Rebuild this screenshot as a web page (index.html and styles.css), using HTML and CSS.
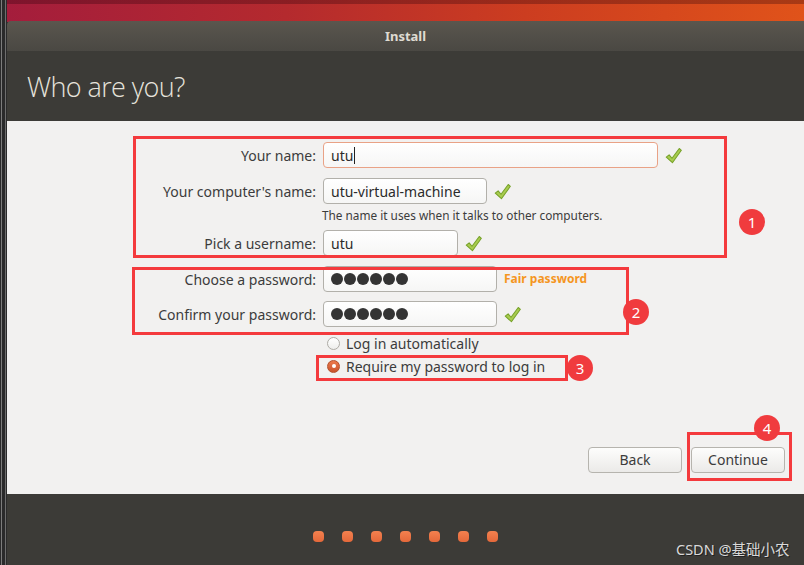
FILE: index.html
```html
<!DOCTYPE html>
<html>
<head>
<meta charset="utf-8">
<link rel="stylesheet" href="styles.css">
</head>
<body>
<div class="screen">
  <div class="edge"></div>
  <div class="main">
    <div class="desktop"></div>
    <div class="window">
      <div class="titlebar">Install</div>
      <div class="header"><h1>Who are you?</h1></div>
      <div class="content">
        <div class="form">
          <div class="row">
            <label class="label">Your name:</label>
            <div class="input focused w-name"><span>utu</span><span class="caret"></span></div>
            <svg class="check" viewBox="0 0 16 16"><path d="M1.2 9.6 L3.9 7.4 L6.6 10.6 L13.4 1.4 L15.4 3.1 L7 14.8 Z"/></svg>
          </div>
          <div class="row r2">
            <label class="label">Your computer's name:</label>
            <div class="input w-comp"><span>utu-virtual-machine</span></div>
            <svg class="check" viewBox="0 0 16 16"><path d="M1.2 9.6 L3.9 7.4 L6.6 10.6 L13.4 1.4 L15.4 3.1 L7 14.8 Z"/></svg>
          </div>
          <div class="hintrow">
            <span class="label"></span>
            <span class="hint">The name it uses when it talks to other computers.</span>
          </div>
          <div class="row r3">
            <label class="label">Pick a username:</label>
            <div class="input w-user"><span>utu</span></div>
            <svg class="check" viewBox="0 0 16 16"><path d="M1.2 9.6 L3.9 7.4 L6.6 10.6 L13.4 1.4 L15.4 3.1 L7 14.8 Z"/></svg>
          </div>
          <div class="row r4">
            <label class="label">Choose a password:</label>
            <div class="input w-pass"><span class="dots"><i></i><i></i><i></i><i></i><i></i><i></i></span></div>
            <span class="strength">Fair password</span>
          </div>
          <div class="row r5">
            <label class="label">Confirm your password:</label>
            <div class="input w-pass"><span class="dots"><i></i><i></i><i></i><i></i><i></i><i></i></span></div>
            <svg class="check" viewBox="0 0 16 16"><path d="M1.2 9.6 L3.9 7.4 L6.6 10.6 L13.4 1.4 L15.4 3.1 L7 14.8 Z"/></svg>
          </div>
          <div class="radiorow rr1">
            <span class="label"></span>
            <span class="radio"></span>
            <span class="rtext">Log in automatically</span>
          </div>
          <div class="radiorow rr2">
            <span class="label"></span>
            <span class="radio on"></span>
            <span class="rtext">Require my password to log in</span>
          </div>
        </div>
        <div class="buttons">
          <button class="btn">Back</button>
          <button class="btn">Continue</button>
        </div>
      </div>
      <div class="footer">
        <span class="dot"></span><span class="dot"></span><span class="dot"></span><span class="dot"></span><span class="dot"></span><span class="dot"></span><span class="dot"></span>
      </div>
    </div>
  </div>

  <div class="mark box1"></div>
  <div class="mark box2"></div>
  <div class="mark box3"></div>
  <div class="mark box4"></div>
  <div class="num n1">1</div>
  <div class="num n2">2</div>
  <div class="num n3">3</div>
  <div class="num n4">4</div>
  <div class="watermark">CSDN @基础小农</div>
</div>
</body>
</html>
```
FILE: styles.css
```css
* { box-sizing: border-box; }
html, body { margin: 0; padding: 0; }
body {
  width: 804px;
  height: 565px;
  overflow: hidden;
  background: #2b2b2b;
  font-family: "Noto Sans", "Open Sans", sans-serif;
}
.screen {
  position: relative;
  width: 804px;
  height: 565px;
  display: flex;
}
.edge {
  width: 7px;
  flex: none;
  background: linear-gradient(to right, #2a2a2b 0 1px, #7c7c7c 1px 2px, #2a2a2b 2px 5px, #6e6e6e 5px 6px, #2a2a2b 6px 7px);
}
.main {
  flex: 1;
  display: flex;
  flex-direction: column;
}
.desktop {
  height: 22px;
  flex: none;
  background:
    linear-gradient(to bottom, rgba(40,0,10,0.3) 0 4px, transparent 4px),
    linear-gradient(to right, #a41d3c 0%, #b42a2e 35%, #cc3d20 65%, #e0531a 100%);
}
.window {
  flex: 1;
  display: flex;
  flex-direction: column;
  border-top-left-radius: 4px;
  overflow: hidden;
  margin-top: -1px;
}
.titlebar {
  height: 30px;
  flex: none;
  background: linear-gradient(to bottom, #5a564e, #4a4843);
  color: #dfdbd2;
  font-weight: bold;
  font-size: 13px;
  text-align: center;
  line-height: 31px;
}
.header {
  height: 70px;
  flex: none;
  background: #3c3b37;
  padding-left: 20px;
  display: flex;
  align-items: center;
}
.header h1 {
  margin: 0;
  font-family: "Open Sans", "Noto Sans", sans-serif;
  font-weight: 300;
  font-size: 27px;
  color: #e6e3dc;
  letter-spacing: -0.6px;
  padding-top: 1px;
}
.content {
  height: 373px;
  flex: none;
  background: #f2f1f0;
  display: flex;
  flex-direction: column;
}
.form {
  padding-top: 21px;
  display: flex;
  flex-direction: column;
}
.row {
  height: 26px;
  display: flex;
  align-items: center;
}
.label {
  width: 309px;
  flex: none;
  text-align: right;
  margin-right: 7px;
  font-size: 14px;
  color: #3c3c3c;
}
.r2 { margin-top: 10px; }
.hintrow { margin-top: 3px; height: 16px; display: flex; align-items: center; }
.hint { font-size: 11.8px; color: #3c3c3c; margin-left: -1px; }
.r3 { margin-top: 7px; }
.r4 { margin-top: 10px; }
.r5 { margin-top: 9px; }
.input {
  height: 26px;
  border: 1px solid #b2b0aa;
  border-radius: 4px;
  background: linear-gradient(to bottom, #ffffff, #f6f6f5);
  display: flex;
  align-items: center;
  padding-left: 7px;
  font-size: 14px;
  color: #2b2b2b;
  flex: none;
}
.input.focused { border-color: #e9a286; }
.caret { width: 1px; height: 17px; background: #222; margin-left: 1px; }
.w-name { width: 335px; }
.w-comp { width: 164px; }
.w-user { width: 135px; }
.w-pass { width: 174px; }
.check {
  width: 17px;
  height: 17px;
  margin-left: 7px;
  flex: none;
}
.check path {
  fill: #a9cc4f;
  stroke: #77a22a;
  stroke-width: 1;
  stroke-linejoin: round;
}
.dots { display: flex; gap: 1px; }
.dots i {
  width: 12px;
  height: 12px;
  border-radius: 50%;
  background: #343434;
  display: block;
}
.strength {
  margin-left: 7px;
  font-size: 12px;
  font-weight: bold;
  color: #f5961f;
  margin-top: -2px;
}
.radiorow {
  height: 20px;
  display: flex;
  align-items: center;
}
.rr1 { margin-top: 6px; }
.rr2 { margin-top: 3px; }
.radio {
  width: 13px;
  height: 13px;
  border-radius: 50%;
  border: 1px solid #aeaca6;
  background: linear-gradient(to bottom, #ffffff, #eeeeec);
  margin-left: 4px;
  margin-right: 6px;
  flex: none;
  display: flex;
  align-items: center;
  justify-content: center;
}
.radio.on {
  border-color: #b4502c;
  background: linear-gradient(to bottom, #ec7a4c, #c9532c);
}
.radio.on::after {
  content: "";
  width: 4px;
  height: 4px;
  border-radius: 50%;
  background: #fff;
}
.rtext { font-size: 14px; color: #3c3c3c; }
.buttons {
  margin-top: auto;
  padding-bottom: 21px;
  padding-right: 19px;
  display: flex;
  justify-content: flex-end;
  gap: 9px;
}
.btn {
  width: 94px;
  height: 26px;
  border: 1px solid #b6b4ae;
  border-radius: 4px;
  background: linear-gradient(to bottom, #fdfdfc, #ebeae8);
  font-family: "Noto Sans", "Open Sans", sans-serif;
  font-size: 14px;
  color: #3c3c3c;
  padding: 0 0 1px;
}
.footer {
  flex: 1;
  background: #3c3b37;
  display: flex;
  justify-content: center;
  align-items: flex-start;
  padding-top: 37px;
  gap: 18px;
}
.dot {
  width: 11px;
  height: 11px;
  border-radius: 4px;
  background: linear-gradient(to bottom, #f3814f, #e4683a);
}
.mark {
  position: absolute;
  border: 3px solid #f43a3d;
}
.box1 { left: 133px; top: 136px; width: 594px; height: 122px; }
.box2 { left: 132px; top: 267px; width: 497px; height: 68px; }
.box3 { left: 316px; top: 355px; width: 252px; height: 26px; }
.box4 { left: 687px; top: 432px; width: 105px; height: 49px; }
.num {
  position: absolute;
  width: 26px;
  height: 26px;
  border-radius: 50%;
  background: #f03b3e;
  color: #fff;
  font-size: 15px;
  line-height: 26px;
  text-align: center;
}
.n1 { left: 739px; top: 209px; }
.n2 { left: 623px; top: 299px; }
.n3 { left: 567px; top: 355px; }
.n4 { left: 754px; top: 415px; }
.watermark {
  position: absolute;
  left: 676px;
  top: 538px;
  font-family: "Noto Sans", "Noto Sans CJK SC", sans-serif;
  font-size: 14.5px;
  color: #d9d9d9;
  text-shadow: 1px 1px 0 #222;
}
```
